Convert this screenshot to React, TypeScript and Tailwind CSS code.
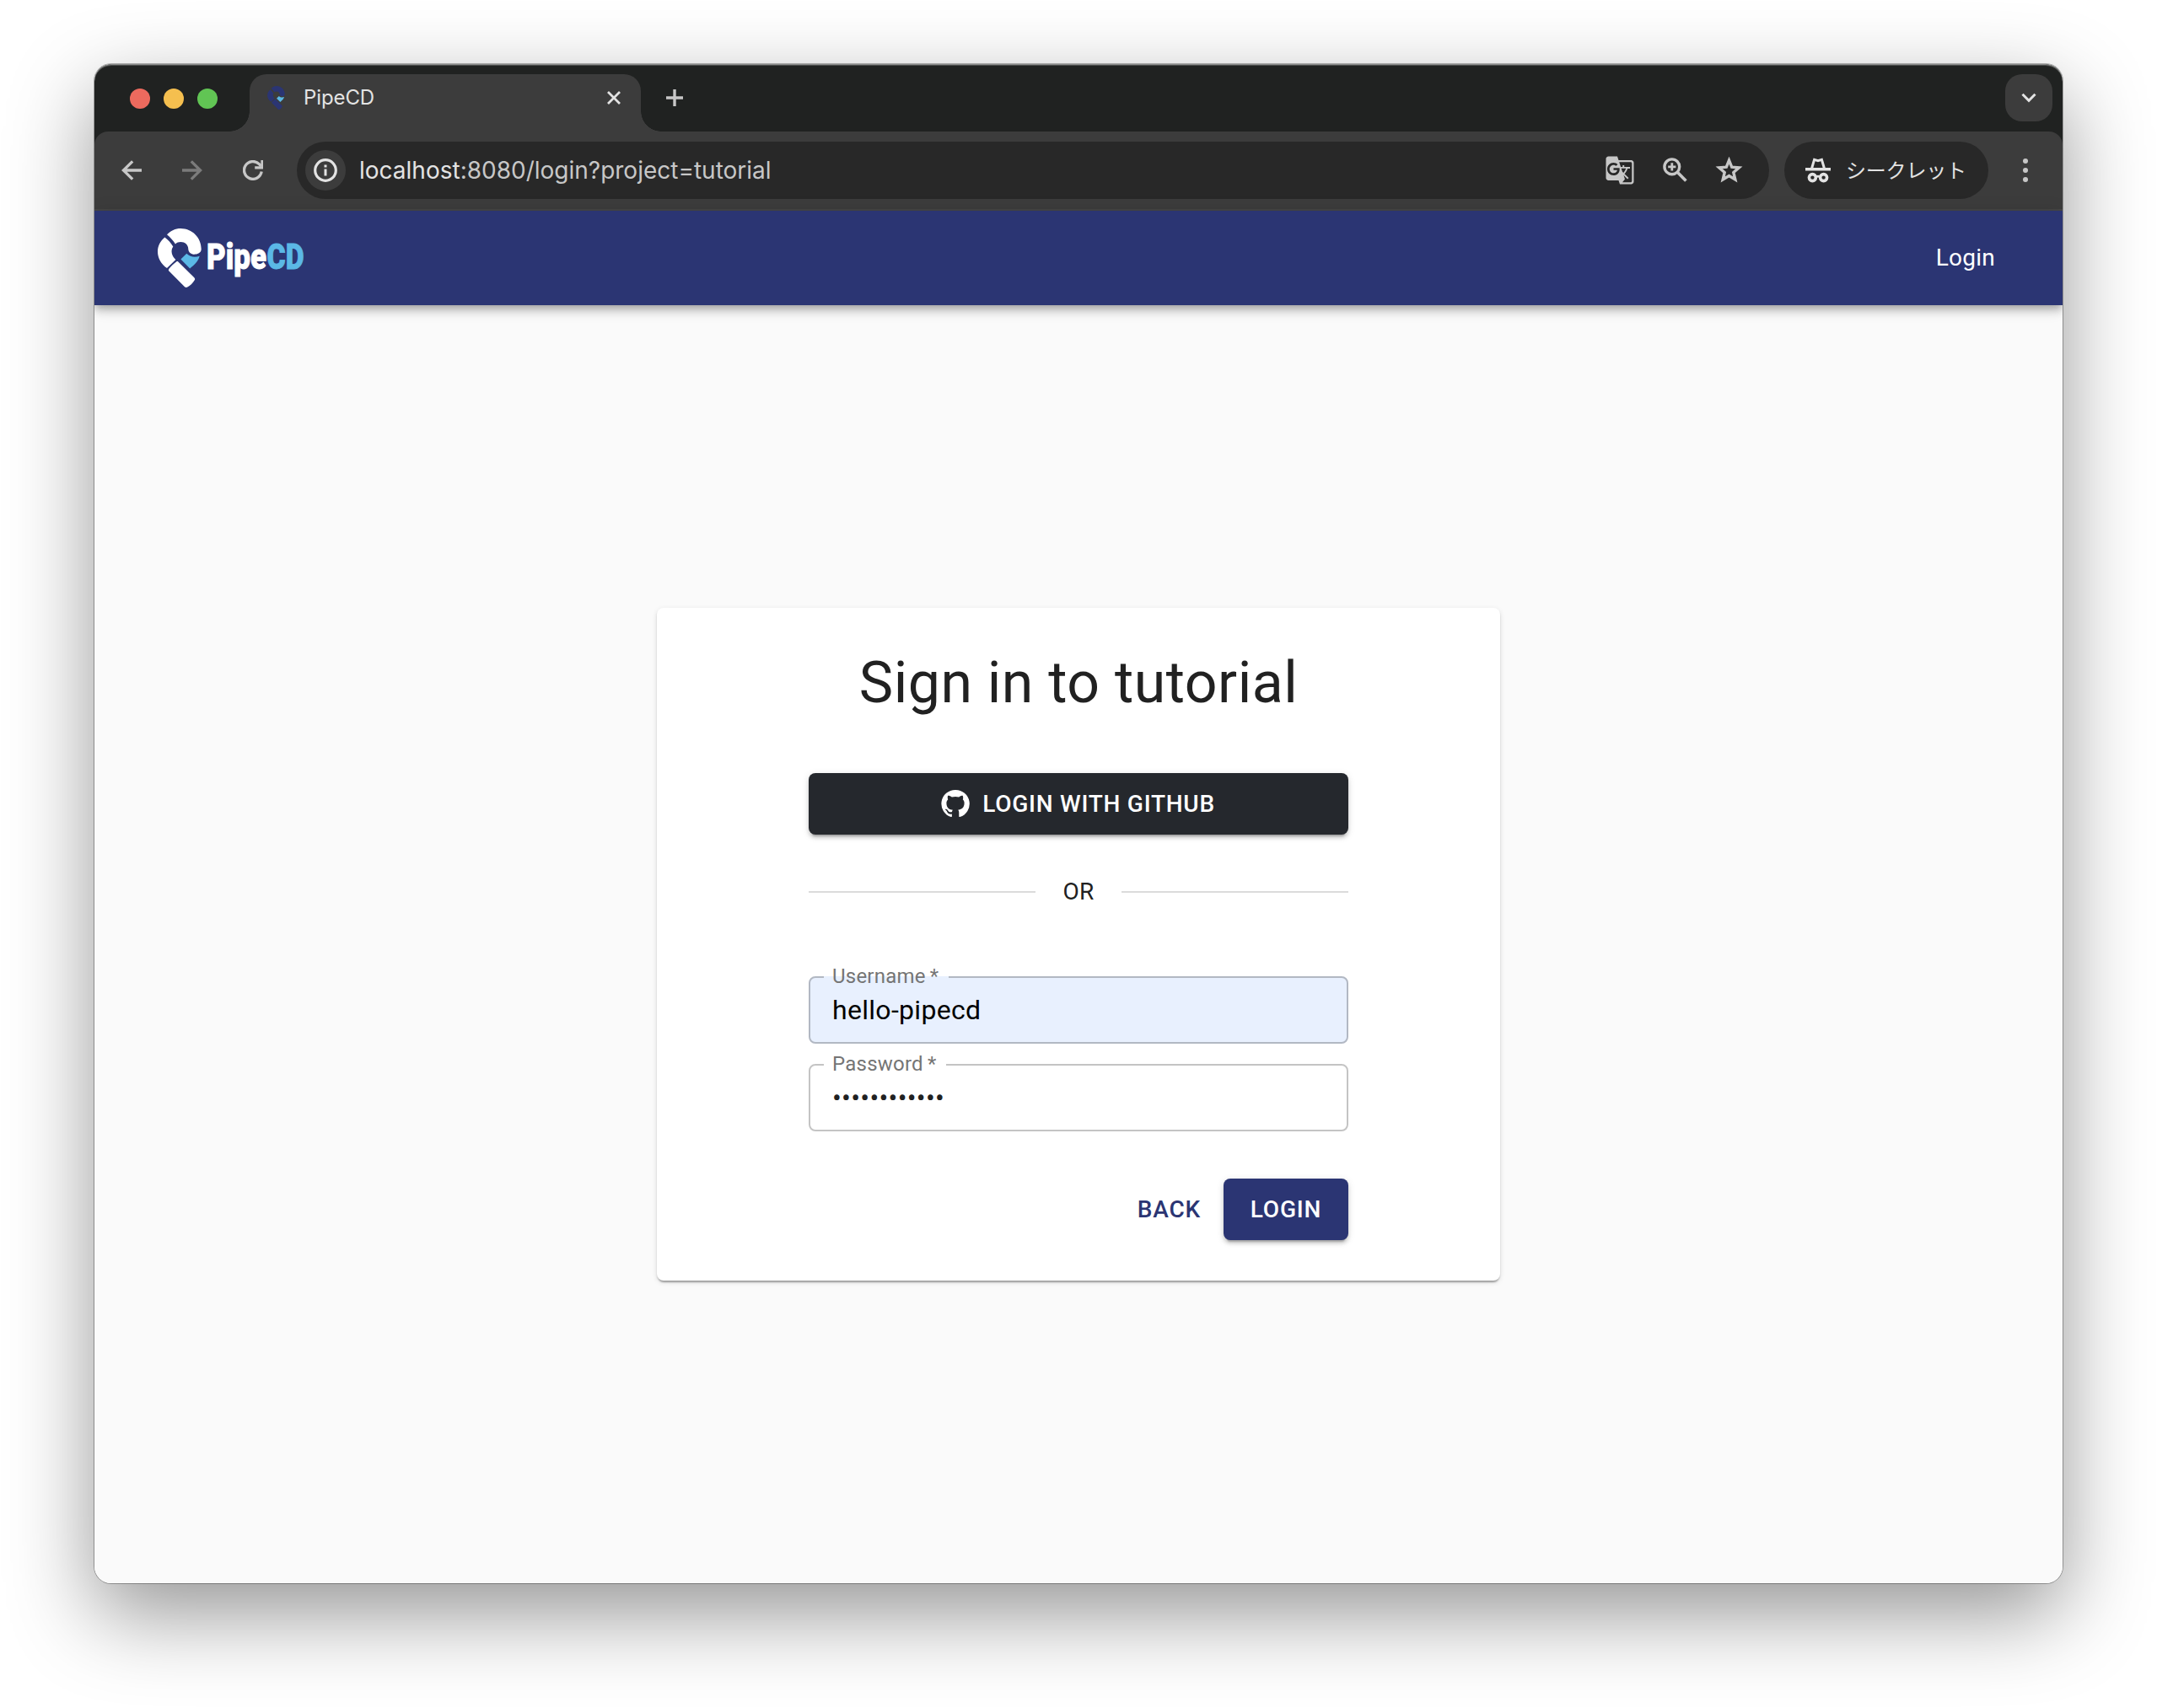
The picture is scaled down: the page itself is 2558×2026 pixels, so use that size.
import React from "react";
import { MdGTranslate } from "react-icons/md";

const UI = "font-['Inter','Noto_Sans_CJK_JP',sans-serif]";

function Mark({ className, main, accent }: { className: string; main: string; accent: string }) {
  return (
    <svg className={className} viewBox="0 0 52 70" aria-hidden="true">
      <path
        fill={main}
        d="M11 7.3C15.2 2.6 21 0 27.2 0C41 0 51.7 11 51.7 24.5C51.7 28 48.3 30.3 44.6 30.6C40 31 36.6 28.6 36.3 24.4C36.2 19.6 32.4 16.1 27.3 16.1C24.8 16.1 22.7 16.9 21 18.4C18 14 15 10.6 11 7.3Z"
      />
      <path
        fill={main}
        d="M8.4 10.6C12.6 13.8 15.8 17.3 18.3 21.6C16.7 24 16.2 26.6 16.8 29.6C17.4 32.6 19 34.8 21.4 36.9L11 47.1C4 42 0 35 0 27.2C0 20.8 3.2 14.8 8.4 10.6Z"
      />
      <path fill={main} d="M24.3 39.4L43.3 58.2C44.4 59.3 44.4 60.4 43.6 61.6C41.4 65.2 38.6 68 35.3 69.6C34.2 70.2 33 70.1 32 69.2L13.4 50.4C12.6 49.5 12.8 48.6 13.4 47.7C16 44.4 19 41.7 22.4 39.2C23 38.8 23.8 38.9 24.3 39.4Z" />
      <path fill={accent} d="M34.3 29.8C38.6 34 44 34.6 49.7 32.8C48.2 38.8 43.6 43.2 38.2 47.4L27.4 36.6Z" />
    </svg>
  );
}

function TabStrip() {
  return (
    <div className="flex h-20 items-end rounded-t-[20px] bg-[#202221] pr-3 shadow-[inset_0_1px_0_#8a8b8a,inset_0_2px_0_#4c4e4d]">
      <div className="flex h-[78px] w-[184px] items-center gap-4 pl-[42px]">
        <span className="size-6 rounded-full bg-[#ed6a5e]" />
        <span className="size-6 rounded-full bg-[#f5bf4f]" />
        <span className="size-6 rounded-full bg-[#61c554]" />
      </div>
      <div className="relative flex h-[68px] w-[464px] items-center rounded-t-[20px] bg-[#3c3c3c] pb-3 pl-[21px] pr-6">
        <span className="absolute -left-6 bottom-0 size-6 bg-[radial-gradient(circle_at_0_0,#202221_23.5px,#3c3c3c_24px)]" />
        <span className="absolute -right-6 bottom-0 size-6 bg-[radial-gradient(circle_at_100%_0,#202221_23.5px,#3c3c3c_24px)]" />
        <Mark className="h-7 w-[21px]" main="#2b3573" accent="#5bb8e6" />
        <span className={`${UI} ml-[22px] flex-1 text-[24px] tracking-[-0.1px] text-[#e3e3e3]`}>PipeCD</span>
        <svg className="size-4" viewBox="0 0 16 16" stroke="#e3e3e3" strokeWidth="2.8">
          <path d="M1 1L15 15M15 1L1 15" />
        </svg>
      </div>
      <svg className="mb-[30px] ml-[30px] size-5" viewBox="0 0 20 20" stroke="#c7c7c7" strokeWidth="3.4">
        <path d="M10 0V20M0 10H20" />
      </svg>
      <div className="mb-3 ml-auto flex size-14 items-center justify-center rounded-[20px] bg-[#3c3c3c]">
        <svg className="h-3 w-[18px]" viewBox="0 0 18 12" fill="none" stroke="#e3e3e3" strokeWidth="3">
          <path d="M1.5 1.8L9 9.3L16.5 1.8" />
        </svg>
      </div>
    </div>
  );
}

function Arrow({ className }: { className: string }) {
  return (
    <svg className={className} viewBox="0 0 24 24" fill="none" stroke="currentColor" strokeWidth="3.3">
      <path d="M24 12H2.5M13.2 1.3L2.4 12L13.2 22.7" />
    </svg>
  );
}

function Reload() {
  return (
    <svg className="ml-12 size-6" viewBox="0 0 24 24" fill="none" stroke="#c7c7c7" strokeWidth="3.3">
      <path d="M22.2 13.6A10.4 10.4 0 1 1 19.4 4.7L21.6 7" />
      <path d="M23 0V8.8H14.2" />
    </svg>
  );
}

function InfoGlyph() {
  return (
    <svg className="size-7" viewBox="0 0 28 28" fill="none" stroke="#e3e3e3">
      <circle cx="14" cy="14" r="12.3" strokeWidth="3.2" />
      <path strokeWidth="3" d="M14 12.6V20.6M14 7.4V10.4" />
    </svg>
  );
}

function ZoomGlyph() {
  return (
    <svg className="ml-[33px] h-[30px] w-[29px]" viewBox="0 0 29 30" fill="none" stroke="#c7c7c7">
      <circle cx="10.8" cy="10.8" r="8.9" strokeWidth="3.4" />
      <path strokeWidth="3.6" d="M17 17L27.4 27.6" />
      <path strokeWidth="2.8" d="M10.8 6.2V15.4M6.2 10.8H15.4" />
    </svg>
  );
}

function StarGlyph() {
  return (
    <svg className="ml-[33px] h-8 w-[33px]" viewBox="0 0 33 32" fill="none" stroke="#c7c7c7" strokeWidth="3.4">
      <path d="M16.5 4.2L19.7 12.2L28.3 12.9L21.8 18.5L23.8 27L16.5 22.5L9.2 27L11.2 18.5L4.7 12.9L13.3 12.2Z" />
    </svg>
  );
}

function Incognito() {
  return (
    <svg className="h-[30px] w-[30px]" viewBox="0 0 30 30" fill="none" stroke="#e3e3e3">
      <path strokeWidth="3" d="M7.5 13L10.6 2.4L15 3.8L19.4 2.4L22.5 13" />
      <path strokeWidth="3.6" d="M0 13.8H30" />
      <circle cx="8.4" cy="23.6" r="4" strokeWidth="3.6" />
      <circle cx="21.6" cy="23.6" r="4" strokeWidth="3.6" />
      <path strokeWidth="2.6" d="M12 22.8Q15 21.4 18 22.8" />
    </svg>
  );
}

function Toolbar() {
  return (
    <div className="bg-[#202221]">
      <div className="flex h-[94px] items-center rounded-t-[16px] border-b-2 border-[#474747] bg-[#3c3c3c] pl-8 pr-[41px]">
        <Arrow className="size-6 text-[#c7c7c7]" />
        <Arrow className="ml-12 size-6 rotate-180 text-[#7b7b7b]" />
        <Reload />
        <div className="ml-10 flex h-[68px] w-[1746px] items-center rounded-full bg-[#282828] pl-[10px] pr-[31px]">
          <span className="flex size-12 items-center justify-center rounded-full bg-[#3c3c3c]">
            <InfoGlyph />
          </span>
          <span className={`${UI} ml-4 flex-1 text-[28px] text-[#c7c7c7]`}>
            <span className="text-[#e3e3e3]">localhost</span>:8080/login?project=tutorial
          </span>
          <MdGTranslate className="size-9 text-[#c7c7c7]" />
          <ZoomGlyph />
          <StarGlyph />
        </div>
        <div className="ml-[18px] flex h-[68px] w-[242px] items-center rounded-full bg-[#282828] pl-[25px]">
          <Incognito />
          <span className={`${UI} ml-[18px] mt-0.5 whitespace-nowrap text-2xl tracking-[-0.2px] text-[#e3e3e3]`}>シークレット</span>
        </div>
        <div className="ml-auto flex flex-col gap-[5px]">
          <span className="size-1.5 rounded-full bg-[#c7c7c7]" />
          <span className="size-1.5 rounded-full bg-[#c7c7c7]" />
          <span className="size-1.5 rounded-full bg-[#c7c7c7]" />
        </div>
      </div>
    </div>
  );
}

function AppBar() {
  return (
    <header className="relative flex h-28 items-center bg-[#2b3573] pl-[75px] pr-20 shadow-[0_4px_8px_-2px_rgba(0,0,0,0.2),0_8px_10px_0_rgba(0,0,0,0.14),0_2px_20px_0_rgba(0,0,0,0.12)]">
      <Mark className="h-[70px] w-[52px]" main="#ffffff" accent="#5bb8e6" />
      <svg className="ml-[5px] h-[60px] w-[120px] overflow-visible font-black" viewBox="0 0 120 60" fontFamily="Roboto" fontSize="42.5">
        <text x="1" y="43" textLength="71" lengthAdjust="spacingAndGlyphs" fill="#ffffff" stroke="#ffffff" strokeWidth="0.9">Pipe</text>
        <text x="72.5" y="43" textLength="44" lengthAdjust="spacingAndGlyphs" fill="#5bb8e6" stroke="#5bb8e6" strokeWidth="0.9">CD</text>
      </svg>
      <span className="ml-auto text-[28px] tracking-[0.26px] text-white">Login</span>
    </header>
  );
}

function Field({ label, notch, filled, children }: { label: string; notch: string; filled?: boolean; children: React.ReactNode }) {
  return (
    <div className={`relative flex h-20 items-center rounded-lg px-7 ${filled ? "bg-[#e8f0fe]" : "bg-white"}`}>
      <fieldset className="pointer-events-none absolute inset-x-0 -top-[10px] bottom-0 rounded-lg border-2 border-black/[0.23] pl-4">
        <legend className={`h-[22px] ${notch}`} />
      </fieldset>
      <span className="absolute left-7 -top-[14px] text-2xl leading-7 tracking-[0.225px] text-[#757575]">{label}&#8201;*</span>
      {children}
    </div>
  );
}

const BUTTON_SHADOW = "shadow-[0_6px_2px_-4px_rgba(0,0,0,0.2),0_4px_4px_0_rgba(0,0,0,0.14),0_2px_10px_0_rgba(0,0,0,0.12)]";

function SignInCard() {
  return (
    <section className="flex h-[798px] w-[1000px] flex-col rounded-lg bg-white px-[180px] pt-[47px] shadow-[0_4px_2px_-2px_rgba(0,0,0,0.2),0_2px_2px_0_rgba(0,0,0,0.14),0_2px_6px_0_rgba(0,0,0,0.12)]">
      <h1 className="text-center text-[68px] leading-[84px] tracking-[0.5px] text-[#212121]">Sign in to tutorial</h1>
      <button className={`mt-[65px] flex h-[73px] items-center justify-center gap-[14px] rounded-lg bg-[#25282d] pr-0.5 text-[28px] font-medium tracking-[0.75px] text-white ${BUTTON_SHADOW}`}>
        <svg className="mb-0.5 size-9" viewBox="0 0 24 24" fill="currentColor">
          <path d="M12 1.27a11 11 0 00-3.48 21.46c.55.09.73-.28.73-.55v-1.84c-3.03.64-3.67-1.46-3.67-1.46-.55-1.29-1.28-1.65-1.28-1.65-.92-.65.1-.65.1-.65 1.1 0 1.73 1.1 1.73 1.1.92 1.65 2.57 1.2 3.21.92a2 2 0 01.64-1.47c-2.47-.27-5.04-1.19-5.04-5.5 0-1.1.46-2.1 1.2-2.84a3.76 3.76 0 010-2.93s.91-.28 3.11 1.1c1.8-.49 3.7-.49 5.5 0 2.1-1.38 3.02-1.1 3.02-1.1a3.76 3.76 0 01.1 2.93c.83.74 1.2 1.74 1.2 2.94 0 4.21-2.57 5.13-5.04 5.4.45.37.82.92.82 2.02v3.03c0 .27.1.64.73.55A11 11 0 0012 1.27" />
        </svg>
        LOGIN WITH GITHUB
      </button>
      <div className="mt-[48px] flex h-10 items-center gap-8 text-[28px] text-[#212121]">
        <span className="h-0.5 flex-1 bg-black/[0.14]" />
        <span className="tracking-[0.26px]">OR</span>
        <span className="h-0.5 flex-1 bg-black/[0.14]" />
      </div>
      <div className="mt-[80px] flex flex-col gap-6">
        <Field label="Username" notch="w-[148px]" filled>
          <span className="text-[32px] tracking-[0.3px] text-black">hello-pipecd</span>
        </Field>
        <Field label="Password" notch="w-[145px]">
          <span className="text-[32px] tracking-[0.3px] text-[#212121]">••••••••••••</span>
        </Field>
      </div>
      <div className="mt-14 flex items-center justify-end text-[28px] font-medium tracking-[0.8px]">
        <button className="mr-[27px] text-[#2b3573]">BACK</button>
        <button className={`h-[73px] w-[148px] rounded-lg bg-[#2b3573] text-white ${BUTTON_SHADOW}`}>LOGIN</button>
      </div>
    </section>
  );
}

export default function App() {
  return (
    <div className="h-[2026px] w-[2558px] bg-white pl-28 pt-[76px] font-['Roboto',sans-serif]">
      <div className="rounded-[20px] h-[1802px] w-[2334px] shadow-[0_0_0_1px_rgba(0,0,0,0.3),0_36px_100px_0_rgba(0,0,0,0.42)]">
        <div className="flex h-full flex-col overflow-hidden rounded-[20px] bg-[#fafafa]">
          <TabStrip />
          <Toolbar />
          <AppBar />
          <main className="flex flex-1 items-center justify-center">
            <SignInCard />
          </main>
        </div>
      </div>
    </div>
  );
}
